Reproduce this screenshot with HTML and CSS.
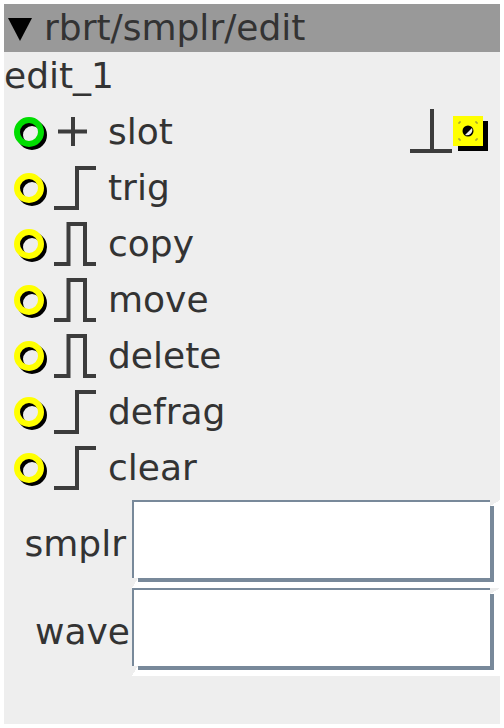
FILE: index.html
```html
<!DOCTYPE html>
<html>
<head>
<meta charset="utf-8">
<link rel="stylesheet" href="styles.css">
</head>
<body>
<main class="panel">
  <header class="title"><svg class="caret" width="24" height="24" viewBox="0 0 24 24"><path d="M0 0H24L12 23Z"/></svg><span class="title-text">rbrt/smplr/edit</span></header>
  <div class="name">edit_1</div>
  <div class="row">
    <span class="port green"></span>
    <svg class="sig" width="44" height="44" viewBox="0 0 44 44"><path d="M4 21.5H33M19 7V36"/></svg>
    <span class="label">slot</span>
    <svg class="ground" width="42" height="44" viewBox="0 0 42 44"><path d="M22 -1V43M0 41H42"/></svg>
    <svg class="square" width="35" height="36" viewBox="0 0 35 36">
      <rect class="sq-shadow" x="5" y="5" width="30" height="30"/>
      <rect class="sq-face" width="30" height="30"/>
      <circle class="sq-hole" cx="15" cy="15" r="5.5"/>
      <path class="sq-light" d="M19 12A5.5 5.5 0 0 1 12 19Z"/>
      <path class="sq-ticks" d="M6 8V6H8M22 6H24V8M6 22V24H8M24 22V24H22"/>
    </svg>
  </div>
  <div class="row">
    <span class="port"></span>
    <svg class="sig" width="44" height="44" viewBox="0 0 44 44"><path d="M0 42H23V2H42"/></svg>
    <span class="label">trig</span>
  </div>
  <div class="row">
    <span class="port"></span>
    <svg class="sig" width="44" height="44" viewBox="0 0 44 44"><path d="M0 42H14.5V2H31V42H42"/></svg>
    <span class="label">copy</span>
  </div>
  <div class="row">
    <span class="port"></span>
    <svg class="sig" width="44" height="44" viewBox="0 0 44 44"><path d="M0 42H14.5V2H31V42H42"/></svg>
    <span class="label">move</span>
  </div>
  <div class="row">
    <span class="port"></span>
    <svg class="sig" width="44" height="44" viewBox="0 0 44 44"><path d="M0 42H14.5V2H31V42H42"/></svg>
    <span class="label">delete</span>
  </div>
  <div class="row">
    <span class="port"></span>
    <svg class="sig" width="44" height="44" viewBox="0 0 44 44"><path d="M0 42H23V2H42"/></svg>
    <span class="label">defrag</span>
  </div>
  <div class="row">
    <span class="port"></span>
    <svg class="sig" width="44" height="44" viewBox="0 0 44 44"><path d="M0 42H23V2H42"/></svg>
    <span class="label">clear</span>
  </div>
  <div class="fields">
    <div class="field">
      <label class="flabel flabel-inset">smplr</label>
      <div class="entry"><div class="entry-in"></div></div>
    </div>
    <div class="field">
      <label class="flabel">wave</label>
      <div class="entry"><div class="entry-in"></div></div>
    </div>
  </div>
</main>
</body>
</html>
```
FILE: styles.css
```css
html, body { margin: 0; padding: 0; background: #fff; }
body { padding: 4px; width: 496px; height: 720px; overflow: hidden; }
.panel {
  width: 496px;
  height: 720px;
  background: #eee;
  color: #333;
  font-family: "DejaVu Sans", sans-serif;
  font-size: 36px;
  display: flex;
  flex-direction: column;
}
.title {
  height: 48px;
  background: #999;
  display: flex;
  align-items: center;
  padding-left: 4px;
  gap: 12px;
}
.title-text { padding-bottom: 2px; }
.caret { fill: #000; margin-top: 4px; flex: none; }
.name { height: 52px; line-height: 48px; }
.row {
  height: 56px;
  display: flex;
  align-items: center;
}
.port {
  position: relative;
  width: 30px;
  height: 30px;
  margin-left: 10px;
  margin-right: 2px;
  flex: none;
}
.port::before,
.port::after {
  content: "";
  position: absolute;
  inset: 0;
  border-radius: 50%;
  box-sizing: border-box;
  border: 6px solid #ff0;
}
.port::before { border-color: #000; transform: translate(3px, 3px); }
.port.green::after { border-color: #0d0; }
.sig {
  fill: none;
  stroke: #3c3c3c;
  stroke-width: 4;
  margin-left: 8px;
  flex: none;
  overflow: visible;
}
.label { margin-left: 10px; flex: 1; padding-bottom: 2px; }
.ground { flex: none; stroke: #3c3c3c; stroke-width: 4; fill: none; overflow: visible; }
.square { flex: none; margin-left: 1px; margin-right: 12px; margin-top: 4px; }
.sq-shadow { fill: #000; }
.sq-face { fill: #ff0; }
.sq-hole { fill: #000; }
.sq-light { fill: #eee; }
.sq-ticks { fill: none; stroke: #8a8a40; stroke-width: 1; }
.fields { margin-top: 4px; }
.field {
  height: 88px;
  display: flex;
  align-items: center;
}
.flabel { width: 126px; text-align: right; flex: none; padding-bottom: 2px; }
.flabel-inset { padding-right: 4px; width: 122px; }
.entry {
  position: relative;
  margin-left: 2px;
  flex: 1;
  align-self: stretch;
  box-sizing: border-box;
  border-style: solid;
  border-width: 0 6px 6px 0;
  border-color: #fff;
}
.entry-in {
  box-sizing: border-box;
  height: 100%;
  background: #fff;
  border-style: solid;
  border-width: 2px 4px 4px 2px;
  border-color: #78899a;
}
.entry::before {
  content: "";
  position: absolute;
  top: 0;
  right: -6px;
  width: 10px;
  height: 6px;
  background: linear-gradient(to top left, #fff 50%, #eee 50%);
}
.entry::after {
  content: "";
  position: absolute;
  left: 0;
  bottom: -6px;
  width: 6px;
  height: 10px;
  background: linear-gradient(to top left, #fff 50%, #eee 50%);
}
```
